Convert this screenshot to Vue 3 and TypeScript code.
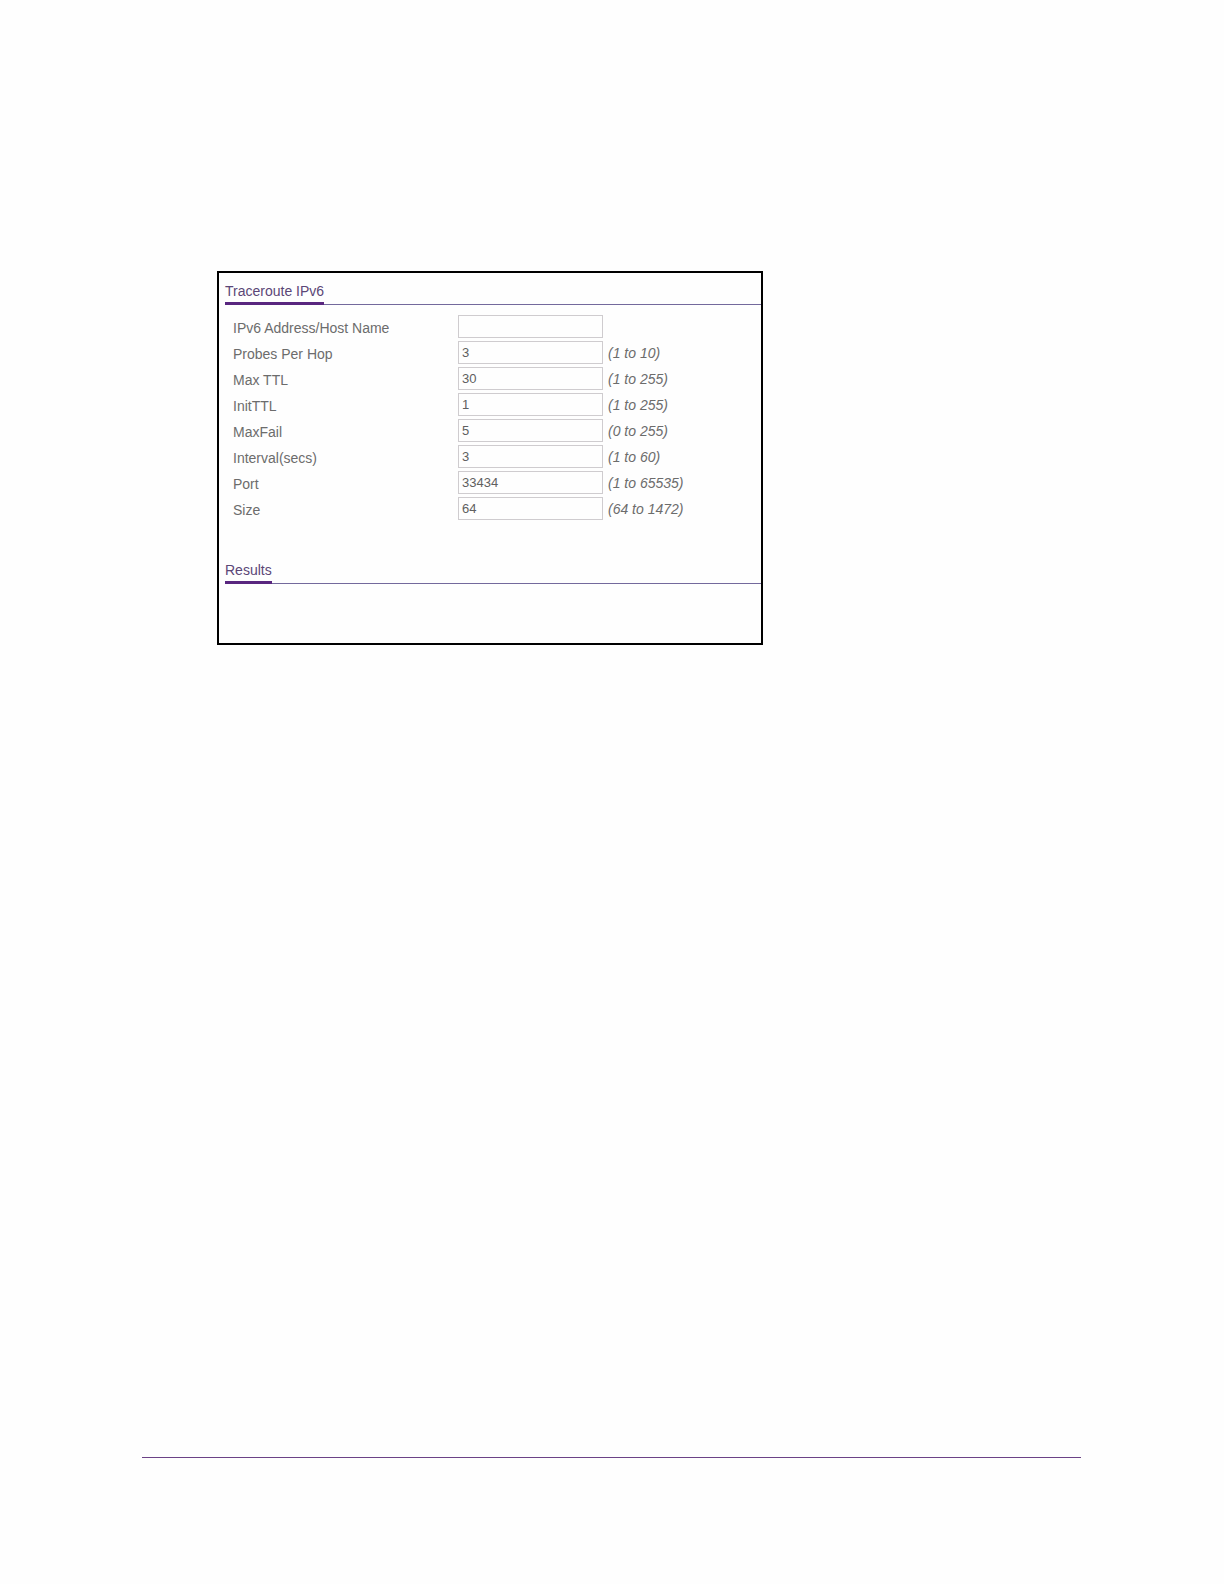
<script setup lang="ts">
import { reactive } from 'vue'

interface Field {
  id: string
  label: string
  value: string
  hint: string
}

const fields = reactive<Field[]>([
  { id: 'host', label: 'IPv6 Address/Host Name', value: '', hint: '' },
  { id: 'probes', label: 'Probes Per Hop', value: '3', hint: '(1 to 10)' },
  { id: 'max-ttl', label: 'Max TTL', value: '30', hint: '(1 to 255)' },
  { id: 'init-ttl', label: 'InitTTL', value: '1', hint: '(1 to 255)' },
  { id: 'max-fail', label: 'MaxFail', value: '5', hint: '(0 to 255)' },
  { id: 'interval', label: 'Interval(secs)', value: '3', hint: '(1 to 60)' },
  { id: 'port', label: 'Port', value: '33434', hint: '(1 to 65535)' },
  { id: 'size', label: 'Size', value: '64', hint: '(64 to 1472)' },
])
</script>

<template>
  <div class="page">
    <main class="panel">
      <section>
        <header class="heading"><h2>Traceroute IPv6</h2></header>
        <form class="fields" @submit.prevent>
          <div v-for="field in fields" :key="field.id" class="row">
            <label :for="field.id">{{ field.label }}</label>
            <input :id="field.id" v-model="field.value" type="text" />
            <span v-if="field.hint" class="hint">{{ field.hint }}</span>
          </div>
        </form>
      </section>
      <section class="results">
        <header class="heading"><h2>Results</h2></header>
      </section>
    </main>
    <footer class="rule"></footer>
  </div>
</template>

<style>
body {
  margin: 0;
  background: #fefefe;
}
</style>

<style scoped>
.page {
  box-sizing: border-box;
  display: flex;
  flex-direction: column;
  min-height: 100vh;
  padding: 271px 143px 126px 142px;
  font-family: "Liberation Sans", Arial, sans-serif;
  font-size: 14px;
  line-height: 20px;
  color: #6c6c6c;
}

.panel {
  box-sizing: border-box;
  width: 100%;
  max-width: 546px;
  margin-left: 75px;
  padding: 8px 0 59px 6px;
  border: 2px solid #000;
  background: #fefefe;
}

.heading {
  display: flex;
  border-bottom: 1px solid #73699c;
}

.heading h2 {
  margin: 0 0 -1px;
  padding-bottom: 1px;
  border-bottom: 3px solid #59267f;
  font-size: 14px;
  font-weight: 400;
  line-height: 20px;
  color: #5b4677;
}

.fields {
  display: flex;
  flex-direction: column;
  gap: 3px;
  padding: 10px 0 0 8px;
}

.row {
  display: flex;
  align-items: center;
}

.row label {
  width: 225px;
  padding-top: 3px;
}

.row input {
  box-sizing: border-box;
  width: 145px;
  height: 23px;
  padding: 0 3px;
  border: 1px solid #cfcccf;
  border-radius: 0;
  outline: 0;
  background: #fefefe;
  font-family: inherit;
  font-size: 13px;
  color: #606060;
}

.hint {
  margin-left: 5px;
  font-style: italic;
}

.results {
  padding-top: 40px;
}

.rule {
  margin-top: auto;
  border-top: 1px solid #6b4286;
}
</style>
